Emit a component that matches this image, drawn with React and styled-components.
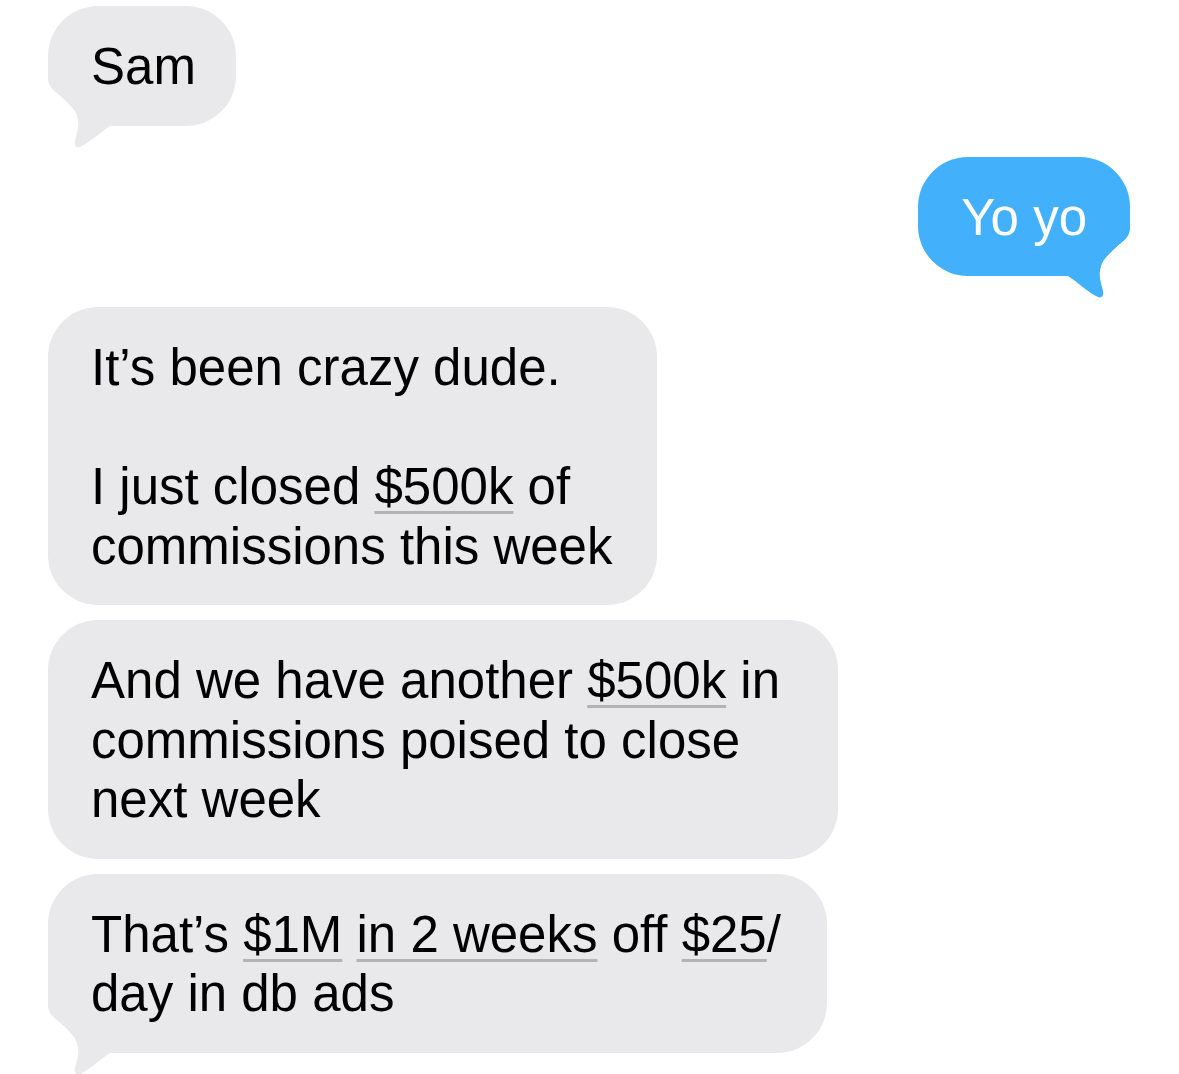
import styled, { createGlobalStyle } from "styled-components";

const GlobalStyle = createGlobalStyle`
  html, body {
    margin: 0;
    padding: 0;
    background: #ffffff;
  }
  body {
    font-family: "Liberation Sans", Arial, sans-serif;
    -webkit-font-smoothing: antialiased;
  }
`;

const GRAY = "#e9e9eb";
const BLUE = "#43b0fb";

// the little curl under the last bubble of a group
// white part cuts the bubble corner so the tail flows out of it
const Tail = ({ color, side }) => (
    <TailSvg $side={side} width="70" height="72" viewBox="0 0 70 72">
        <path
            d="M0,0 C0,8 3,12 8,16 C14,21 22,28 27,35 C31,42 31,50 29,57 C28,62 26,66 27,69 L27,72 L0,72 Z"
            fill="#ffffff"
        />
        <path
            d="M0,0 C0,8 3,12 8,16 C14,21 22,28 27,35 C31,42 31,50 29,57 C28,62 26,66 27,69 C28,72 31,72 34,70 C44,65 52,56 62,50 L70,50 L70,0 Z"
            fill={color}
        />
    </TailSvg>
);

const Message = ({ side = "left", tail, gap, padRight, children }) => {
    const color = side === "right" ? BLUE : GRAY;
    return (
        <Row $side={side} $gap={gap}>
            <Bubble $side={side} $padRight={padRight}>
                <Text>{children}</Text>
                {tail && <Tail color={color} side={side} />}
            </Bubble>
        </Row>
    );
};

const App = () => {
    return (
        <>
            <GlobalStyle />
            <Thread>
                <Message tail gap={0} padRight={40}>Sam</Message>
                <Message side="right" tail gap={31} padRight={43}>Yo yo</Message>
                <Message gap={31}>
                    It’s been crazy dude.
                    <br />
                    <br />
                    I just closed <Link>$500k</Link> of
                    <br />
                    commissions this week
                </Message>
                <Message gap={15} padRight={58}>
                    And we have another <Link>$500k</Link> in
                    <br />
                    commissions poised to close
                    <br />
                    next week
                </Message>
                <Message tail gap={15} padRight={46}>
                    That’s <Link>$1M</Link> <Link>in 2 weeks</Link> off <Link>$25</Link>/
                    <br />
                    day in db ads
                </Message>
            </Thread>
        </>
    );
};

const Thread = styled.div`
    display: flex;
    flex-direction: column;
    padding: 6px 49px 22px 48px;
    box-sizing: border-box;
    width: 1179px;
`;

const Row = styled.div`
    display: flex;
    justify-content: ${(p) => (p.$side === "right" ? "flex-end" : "flex-start")};
    margin-top: ${(p) => p.$gap}px;
`;

const Bubble = styled.div`
    position: relative;
    isolation: isolate;
    background: ${(p) => (p.$side === "right" ? BLUE : GRAY)};
    color: ${(p) => (p.$side === "right" ? "#ffffff" : "#000000")};
    font-size: 51px;
    line-height: 59.5px;
    padding: 31px ${(p) => p.$padRight || 45}px 29px 43px;
    border-radius: 50px;
    white-space: nowrap;
`;

const Text = styled.span`
    position: relative;
    z-index: 1;
`;

const TailSvg = styled.svg`
    position: absolute;
    z-index: 0;
    bottom: -22px;
    ${(p) => (p.$side === "right" ? "right: 0;" : "left: 0;")}
    transform: ${(p) => (p.$side === "right" ? "scaleX(-1)" : "none")};
    overflow: visible;
`;

const Link = styled.span`
    text-decoration: underline;
    text-decoration-color: #b3b3b3;
    text-decoration-thickness: 3px;
    text-underline-offset: 7px;
    text-decoration-skip-ink: none;
`;

export default App;
